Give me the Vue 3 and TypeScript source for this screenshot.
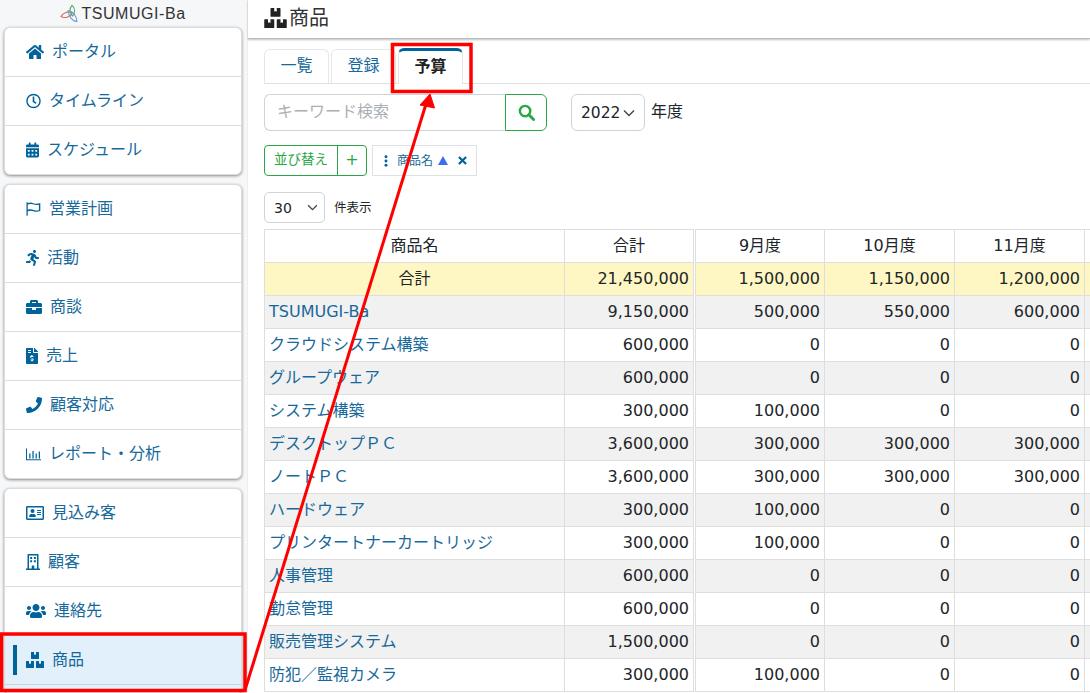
<script setup lang="ts">
interface Nav { label: string; icon: string; w: number; vb: string; active?: boolean }
const P: Record<string, [string, string]> = {
  home: ['0 0 576 512', 'M280.37 148.26L96 300.11V464a16 16 0 0 0 16 16l112.06-.29a16 16 0 0 0 15.92-16V368a16 16 0 0 1 16-16h64a16 16 0 0 1 16 16v95.64a16 16 0 0 0 16 16.05L464 480a16 16 0 0 0 16-16V300L295.67 148.26a12.19 12.19 0 0 0-15.3 0zM571.6 251.47L488 182.56V44.05a12 12 0 0 0-12-12h-56a12 12 0 0 0-12 12v72.61L318.47 43a48 48 0 0 0-61 0L4.34 251.47a12 12 0 0 0-1.6 16.9l25.5 31A12 12 0 0 0 45.15 301l235.22-193.74a12.19 12.19 0 0 1 15.3 0L530.9 301a12 12 0 0 0 16.9-1.6l25.5-31a12 12 0 0 0-1.7-16.93z'],
  clock: ['0 0 512 512', 'M256 8a248 248 0 1 0 0 496 248 248 0 0 0 0-496zm0 448a200 200 0 1 1 0-400 200 200 0 0 1 0 400zm62-104l-85-62c-3-2-5-6-5-10V116c0-7 5-12 12-12h32c7 0 12 5 12 12v142l67 48c5 4 7 11 3 17l-19 26c-4 5-11 7-17 3z'],
  cal: ['0 0 448 512', 'M0 464c0 26.5 21.5 48 48 48h352c26.5 0 48-21.5 48-48V192H0v272zm320-196c0-6.6 5.4-12 12-12h40c6.6 0 12 5.4 12 12v40c0 6.6-5.4 12-12 12h-40c-6.6 0-12-5.4-12-12v-40zm0 128c0-6.6 5.4-12 12-12h40c6.6 0 12 5.4 12 12v40c0 6.6-5.4 12-12 12h-40c-6.6 0-12-5.4-12-12v-40zM192 268c0-6.6 5.4-12 12-12h40c6.6 0 12 5.4 12 12v40c0 6.6-5.4 12-12 12h-40c-6.6 0-12-5.4-12-12v-40zm0 128c0-6.6 5.4-12 12-12h40c6.6 0 12 5.4 12 12v40c0 6.6-5.4 12-12 12h-40c-6.6 0-12-5.4-12-12v-40zM64 268c0-6.6 5.4-12 12-12h40c6.6 0 12 5.4 12 12v40c0 6.6-5.4 12-12 12H76c-6.6 0-12-5.4-12-12v-40zm0 128c0-6.6 5.4-12 12-12h40c6.6 0 12 5.4 12 12v40c0 6.6-5.4 12-12 12H76c-6.6 0-12-5.4-12-12v-40zM400 64h-48V16c0-8.8-7.2-16-16-16h-32c-8.8 0-16 7.2-16 16v48H160V16c0-8.8-7.2-16-16-16h-32c-8.8 0-16 7.2-16 16v48H48C21.5 64 0 85.5 0 112v48h448v-48c0-26.5-21.5-48-48-48z'],
  flag: ['0 0 512 512', 'M16 24h44v464H16zM60 56c70-36 130-24 196 0s130 28 232-4v276c-94 34-164 30-232 6s-126-30-196 2v-52c70-28 136-20 208 4s112 28 172 10V110c-72 18-130 10-200-12S112 76 60 106z'],
  run: ['0 0 416 512', 'M272 96c26.51 0 48-21.49 48-48S298.51 0 272 0s-48 21.49-48 48 21.49 48 48 48zM113.69 317.47l-14.8 34.52H32c-17.67 0-32 14.33-32 32s14.33 32 32 32h77.45c19.25 0 36.58-11.44 44.11-29.09l8.79-20.52-10.67-6.3c-17.32-10.23-30.06-25.37-37.99-42.61zM384 223.99h-44.03l-26.06-53.25c-12.5-25.55-35.45-44.23-61.78-50.94l-71.08-21.14c-28.3-6.8-57.77-.55-80.84 17.14l-39.67 30.41c-14.03 10.75-16.69 30.83-5.92 44.86s30.84 16.66 44.86 5.92l39.69-30.41c7.67-5.89 17.44-8 25.27-6.14l14.7 4.37-37.46 87.39c-12.62 29.48-1.31 64.01 26.3 80.31l84.98 50.17-27.47 87.73c-5.28 16.86 4.11 34.81 20.97 40.09 3.19 1 6.41 1.48 9.58 1.48 13.61 0 26.23-8.77 30.52-22.45l31.64-101.06c5.91-20.77-2.89-43.08-21.64-54.39l-61.24-36.14 31.31-78.28 20.27 41.43c8 16.34 24.92 26.89 43.11 26.89H384c17.67 0 32-14.33 32-32s-14.33-31.99-32-31.99z'],
  case: ['0 0 512 512', 'M320 336c0 8.84-7.16 16-16 16h-96c-8.84 0-16-7.16-16-16v-48H0v144c0 25.6 22.4 48 48 48h416c25.6 0 48-22.4 48-48V288H320v48zm144-208h-80V80c0-25.6-22.4-48-48-48H176c-25.6 0-48 22.4-48 48v48H48c-25.6 0-48 22.4-48 48v80h512v-80c0-25.6-22.4-48-48-48zm-144 0H192V96h128v32z'],
  invoice: ['0 0 384 512', 'M384 121.9V128H256V0h6.1c6.4 0 12.5 2.5 17 7l97.9 98c4.5 4.5 7 10.6 7 16.9zM224 136V0H24C10.7 0 0 10.7 0 24v464c0 13.3 10.7 24 24 24h336c13.3 0 24-10.7 24-24V160H248c-13.2 0-24-10.8-24-24zM64 72c0-4.4 3.6-8 8-8h80c4.4 0 8 3.6 8 8v16c0 4.4-3.6 8-8 8H72c-4.400 0-8-3.6-8-8V72zm0 64c0-4.400 3.600-8 8-8h80c4.400 0 8 3.600 8 8v16c0 4.400-3.600 8-8 8H72c-4.400 0-8-3.600-8-8v-16zm144 263.900V424c0 4.400-3.600 8-8 8h-16c-4.400 0-8-3.600-8-8v-24.300c-11.300-.6-22.300-4.500-31.400-11.400-3.900-2.900-4.100-8.800-.6-12.100l11.800-11.200c2.800-2.600 6.900-2.800 10.100-.8 3.900 2.400 8.300 3.700 12.800 3.700h28.100c6.500 0 11.800-5.900 11.800-13.200 0-6-3.600-11.200-8.800-12.700l-45-13.500c-18.600-5.600-31.600-23.400-31.600-43.400 0-24.500 19-44.400 42.700-45V232c0-4.400 3.600-8 8-8h16c4.400 0 8 3.600 8 8v24.300c11.300.6 22.300 4.500 31.400 11.400 3.900 2.900 4.100 8.800.6 12.100L223 291c-2.800 2.600-6.900 2.800-10.100.8-3.900-2.400-8.300-3.700-12.800-3.700H172c-6.500 0-11.800 5.900-11.800 13.200 0 6 3.600 11.200 8.800 12.700l45 13.500c18.600 5.600 31.600 23.400 31.600 43.400 0 24.500-19 44.400-42.600 45z'],
  phone: ['0 0 512 512', 'M493.4 24.6l-104-24c-11.3-2.6-22.9 3.3-27.5 13.9l-48 112c-4.2 9.800-1.400 21.300 6.900 28l60.600 49.600c-36 76.700-98.900 140.500-177.200 177.200l-49.600-60.600c-6.800-8.300-18.200-11.100-28-6.900l-112 48C3.900 366.500-2 378.100.6 389.400l24 104C27.100 504.200 36.700 512 48 512c256.100 0 464-207.500 464-464 0-11.200-7.700-20.900-18.600-23.400z'],
  chart: ['0 0 512 512', 'M0 64h34v368h478v36H0zM110 240h44v170h-44zM218 150h44v260h-44zM326 240h44v170h-44zM434 170h44v240h-44z'],
  idcard: ['0 0 576 512', 'M528 32H48C21.500 32 0 53.500 0 80v352c0 26.500 21.500 48 48 48h480c26.500 0 48-21.500 48-48V80c0-26.500-21.500-48-48-48zm0 400H48V80h480v352zM208 256a64 64 0 1 0 0-128 64 64 0 0 0 0 128zm-90 128h180c9 0 16-6 16-14v-20c0-33-32-62-72-62-13 0-17 6-34 6s-21-6-34-6c-40 0-72 29-72 62v20c0 8 7 14 16 14zM360 320h112c4 0 8-4 8-8v-16c0-4-4-8-8-8H360c-4 0-8 4-8 8v16c0 4 4 8 8 8zm0-64h112c4 0 8-4 8-8v-16c0-4-4-8-8-8H360c-4 0-8 4-8 8v16c0 4 4 8 8 8zm0-64h112c4 0 8-4 8-8v-16c0-4-4-8-8-8H360c-4 0-8 4-8 8v16c0 4 4 8 8 8z'],
  building: ['0 0 448 512', 'M12 464h36V24c0-13 11-24 24-24h304c13 0 24 11 24 24v440h36c7 0 12 5 12 12v36H0v-36c0-7 5-12 12-12zm84 0h88v-84c0-7 5-12 12-12h56c7 0 12 5 12 12v84h88V48H96zM140 96h48c5 0 8 3 8 8v48c0 5-3 8-8 8h-48c-5 0-8-3-8-8v-48c0-5 3-8 8-8zm120 0h48c5 0 8 3 8 8v48c0 5-3 8-8 8h-48c-5 0-8-3-8-8v-48c0-5 3-8 8-8zM140 200h48c5 0 8 3 8 8v48c0 5-3 8-8 8h-48c-5 0-8-3-8-8v-48c0-5 3-8 8-8zm120 0h48c5 0 8 3 8 8v48c0 5-3 8-8 8h-48c-5 0-8-3-8-8v-48c0-5 3-8 8-8z'],
  users: ['0 0 640 512', 'M96 224c35.300 0 64-28.700 64-64s-28.700-64-64-64-64 28.700-64 64 28.700 64 64 64zm448 0c35.300 0 64-28.700 64-64s-28.700-64-64-64-64 28.700-64 64 28.700 64 64 64zm32 32h-64c-17.600 0-33.500 7.100-45.100 18.600 40.300 22.100 68.900 62 75.100 109.400h66c17.700 0 32-14.300 32-32v-32c0-35.300-28.700-64-64-64zm-256 0c61.900 0 112-50.100 112-112S381.900 32 320 32 208 82.100 208 144s50.100 112 112 112zm76.800 32h-8.300c-20.800 10-43.900 16-68.500 16s-47.600-6-68.500-16h-8.300C179.600 288 128 339.600 128 403.200V432c0 26.500 21.500 48 48 48h288c26.500 0 48-21.500 48-48v-28.800c0-63.600-51.600-115.200-115.200-115.200zm-223.700-13.400C161.500 263.100 145.600 256 128 256H64c-35.300 0-64 28.700-64 64v32c0 17.700 14.300 32 32 32h65.900c6.300-47.400 34.900-87.300 75.200-109.400z'],
  boxes: ['0 0 576 512', 'M560 288h-80v96l-32-21.300-32 21.300v-96h-80c-8.800 0-16 7.200-16 16v192c0 8.800 7.200 16 16 16h224c8.800 0 16-7.200 16-16V304c0-8.800-7.200-16-16-16zm-384-64h224c8.800 0 16-7.200 16-16V16c0-8.800-7.200-16-16-16h-80v96l-32-21.300L256 96V0h-80c-8.800 0-16 7.200-16 16v192c0 8.800 7.200 16 16 16zm64 64h-80v96l-32-21.300L96 384v-96H16c-8.800 0-16 7.200-16 16v192c0 8.800 7.200 16 16 16h224c8.800 0 16-7.200 16-16V304c0-8.800-7.200-16-16-16z'],
}
const item = (label: string, icon: string, w: number, active = false): Nav => ({ label, icon, w, vb: P[icon][0], active })
const groups: Nav[][] = [
  [item('ポータル', 'home', 18), item('タイムライン', 'clock', 15), item('スケジュール', 'cal', 13)],
  [item('営業計画', 'flag', 15), item('活動', 'run', 13), item('商談', 'case', 16), item('売上', 'invoice', 12), item('顧客対応', 'phone', 16), item('レポート・分析', 'chart', 15)],
  [item('見込み客', 'idcard', 18), item('顧客', 'building', 14), item('連絡先', 'users', 20), item('商品', 'boxes', 18, true)],
]
const months = ['9月度', '10月度', '11月度']
const rows: [string, string, string, string, string][] = [
  ['TSUMUGI-Ba', '9,150,000', '500,000', '550,000', '600,000'],
  ['クラウドシステム構築', '600,000', '0', '0', '0'],
  ['グループウェア', '600,000', '0', '0', '0'],
  ['システム構築', '300,000', '100,000', '0', '0'],
  ['デスクトップＰＣ', '3,600,000', '300,000', '300,000', '300,000'],
  ['ノートＰＣ', '3,600,000', '300,000', '300,000', '300,000'],
  ['ハードウェア', '300,000', '100,000', '0', '0'],
  ['プリンタートナーカートリッジ', '300,000', '100,000', '0', '0'],
  ['人事管理', '600,000', '0', '0', '0'],
  ['勤怠管理', '600,000', '0', '0', '0'],
  ['販売管理システム', '1,500,000', '0', '0', '0'],
  ['防犯／監視カメラ', '300,000', '100,000', '0', '0'],
]
</script>

<template>
  <div class="app">
    <aside class="side">
      <div class="logo">
        <svg class="logo-mark" viewBox="0 0 20 19" width="20" height="19" fill="none" stroke-width="1.100">
          <path d="M1 12.500C3 8.500 8 7 12.500 8.500 11 12.500 5 15 1 12.500z" stroke="#d9695a" />
          <path d="M12 1.500C15.500 4 15.500 9 12.500 12 9.500 9 9 4.500 12 1.500z" stroke="#62ad62" />
          <path d="M8 6.500C12.500 7 16.500 11.500 17 17.500 12.500 17.500 8.500 12 8 6.500z" stroke="#6a9fe0" />
        </svg>
        <span>TSUMUGI-Ba</span>
      </div>
      <nav v-for="(g, gi) in groups" :key="gi" class="card">
        <a v-for="n in g" :key="n.label" class="nav" :class="{ active: n.active }">
          <svg class="ico" :viewBox="n.vb" :style="{ width: n.w + 'px' }"><path :d="P[n.icon][1]" /></svg>
          <span>{{ n.label }}</span>
        </a>
        <div v-if="gi === 2" class="tail"></div>
      </nav>
    </aside>

    <main class="main">
      <header class="head">
        <svg class="head-ico" viewBox="0 0 576 512"><path :d="P.boxes[1]" /></svg>
        <h1>商品</h1>
      </header>
      <div class="body">
        <div class="tabs">
          <div class="tab">一覧</div>
          <div class="tab">登録</div>
          <div class="tab on">予算</div>
        </div>

        <div class="filter">
          <div class="search">
            <div class="kw">キーワード検索</div>
            <div class="go">
              <svg viewBox="0 0 18 18" width="17" height="17" fill="none" stroke="#28a745" stroke-width="2.600">
                <circle cx="7.500" cy="7.500" r="5.500" /><path d="M11.500 11.500L16.500 16.500" stroke-linecap="round" stroke-width="3" />
              </svg>
            </div>
          </div>
          <div class="year">2022
            <svg viewBox="0 0 12 8" width="12" height="8" fill="none" stroke="#444" stroke-width="1.400"><path d="M1 1.500l5 5 5-5" /></svg>
          </div>
          <span class="nendo">年度</span>
        </div>

        <div class="sort">
          <div class="sbtn"><span class="sl">並び替え</span><span class="sp">+</span></div>
          <div class="chip">
            <svg viewBox="0 0 4 14" width="4" height="12" fill="#00629b"><circle cx="2" cy="2" r="1.700" /><circle cx="2" cy="7" r="1.700" /><circle cx="2" cy="12" r="1.700" /></svg>
            <span class="cname">商品名</span>
            <svg viewBox="0 0 10 9" width="10" height="9" fill="#3d6cf2"><path d="M5 0l5 9H0z" /></svg>
            <svg class="cx" viewBox="0 0 10 10" width="9" height="9" stroke="#00629b" stroke-width="2.400"><path d="M1 1l8 8M9 1l-8 8" /></svg>
          </div>
        </div>

        <div class="per">
          <div class="pselect">30
            <svg viewBox="0 0 12 8" width="11" height="7" fill="none" stroke="#444" stroke-width="1.500"><path d="M1 1.500l5 5 5-5" /></svg>
          </div>
          <span class="plabel">件表示</span>
        </div>

        <table class="grid">
          <colgroup>
            <col class="c1" /><col class="c2" /><col class="c3" /><col class="c3" /><col class="c3" /><col class="c3" />
          </colgroup>
          <thead>
            <tr>
              <th>商品名</th><th class="dbl">合計</th>
              <th v-for="m in months" :key="m">{{ m }}</th><th></th>
            </tr>
          </thead>
          <tbody>
            <tr class="total">
              <td class="ctr">合計</td><td class="num dbl">21,450,000</td>
              <td class="num">1,500,000</td><td class="num">1,150,000</td><td class="num">1,200,000</td><td></td>
            </tr>
            <tr v-for="r in rows" :key="r[0]" class="row">
              <td class="name">{{ r[0] }}</td><td class="num dbl">{{ r[1] }}</td>
              <td class="num">{{ r[2] }}</td><td class="num">{{ r[3] }}</td><td class="num">{{ r[4] }}</td><td></td>
            </tr>
          </tbody>
        </table>
      </div>
    </main>

    <svg class="marks" viewBox="0 0 1090 693" width="1090" height="693" fill="none">
      <rect x="392.500" y="44.500" width="78.500" height="47" stroke="#f00" stroke-width="3.500" />
      <rect x="1.500" y="634" width="243.500" height="56.500" stroke="#f00" stroke-width="3.500" />
      <path d="M245 690L426 104" stroke="#f00" stroke-width="3" />
      <path d="M430 94L434.500 108L420 105z" fill="#f00" stroke="#f00" stroke-width="1" />
    </svg>
  </div>
</template>

<style>
html, body { margin: 0; padding: 0; background: #fff; overflow: hidden; }
</style>

<style scoped>
.app {
  position: relative;
  display: flex;
  width: 1090px;
  height: 693px;
  overflow: hidden;
  background: #fff;
  font-family: "DejaVu Sans", "Noto Sans CJK JP", sans-serif;
  font-size: 16px;
  line-height: 20px;
  color: #212529;
}
.side {
  flex: 0 0 248px;
  box-sizing: border-box;
  height: 693px;
  padding-left: 4px;
  background: #f6f7f9;
  border-right: 1px solid #eceef0;
  overflow: hidden;
}
.logo {
  height: 27px;
  width: 238px;
  display: flex;
  align-items: center;
  justify-content: center;
  gap: 1px;
  font-family: "Liberation Sans", sans-serif;
  font-size: 16px;
  letter-spacing: 0.550px;
  color: #333;
}
.card {
  box-sizing: border-box;
  width: 238px;
  margin-bottom: 9px;
  background: #fff;
  border: 1px solid #dcdcdc;
  border-radius: 6px;
  box-shadow: 0 1px 3px rgba(0, 0, 0, 0.45);
  overflow: hidden;
}
.nav {
  position: relative;
  box-sizing: border-box;
  height: 49px;
  display: flex;
  align-items: center;
  padding-left: 21px;
  border-bottom: 1px solid #dcdcdc;
  color: #17699b;
  line-height: 1;
}
.card > .nav:last-child { border-bottom: 0; height: 48px; }
.nav.active { background: #e1f0fb; border-bottom-color: #ccd3d8; }
.nav.active::before {
  content: "";
  position: absolute;
  left: 8px;
  top: 9px;
  bottom: 9px;
  width: 4px;
  background: #00639a;
}
.tail { height: 8px; background: #e1f0fb; }
.ico { height: 16px; margin-right: 8px; fill: #00639a; flex: none; }

.main { flex: 1; min-width: 0; height: 693px; display: flex; flex-direction: column; }
.head {
  box-sizing: border-box;
  height: 39px;
  flex: none;
  display: flex;
  align-items: center;
  padding: 0 0 3px 16px;
  border-bottom: 1px solid #bbb;
  box-shadow: 0 1px 2px rgba(0, 0, 0, 0.25);
}
.head-ico { width: 23px; height: 20px; fill: #222; margin-right: 2px; }
h1 { margin: 0; font-size: 20px; font-weight: 400; line-height: 1; color: #333; }
.body { padding: 10px 0 0 16px; }

.tabs {
  display: flex;
  align-items: flex-end;
  gap: 2px;
  height: 35px;
  box-sizing: border-box;
  border-bottom: 1px solid #dee2e6;
}
.tab {
  box-sizing: border-box;
  width: 65px;
  height: 34px;
  border: 1px solid #e4e7ea;
  border-bottom: 0;
  border-radius: 6px 6px 0 0;
  text-align: center;
  line-height: 32px;
  font-size: 16px;
  color: #17699b;
}
.tab.on {
  height: 36px;
  border-top: 3px solid #00639a;
  font-weight: 700;
  color: #222;
  margin-bottom: -1px;
  background: #fff;
}

.filter { display: flex; align-items: center; margin-top: 10px; height: 37px; }
.search { display: flex; width: 283px; height: 37px; }
.kw {
  box-sizing: border-box;
  width: 241px;
  height: 37px;
  padding-left: 12px;
  border: 1px solid #ced4da;
  border-right: 0;
  border-radius: 6px 0 0 6px;
  line-height: 34px;
  color: #a9afb5;
}
.go {
  box-sizing: border-box;
  width: 42px;
  height: 37px;
  border: 1px solid #28a745;
  border-radius: 0 6px 6px 0;
  display: flex;
  align-items: center;
  justify-content: center;
}
.year {
  box-sizing: border-box;
  width: 74px;
  height: 37px;
  margin-left: 24px;
  padding-left: 9px;
  display: flex;
  align-items: center;
  gap: 3px;
  border: 1px solid #ced4da;
  border-radius: 6px;
  font-size: 15.500px;
}
.nendo { margin-left: 6px; margin-top: -2px; }

.sort { display: flex; gap: 5px; margin-top: 14px; height: 31px; }
.sbtn {
  box-sizing: border-box;
  width: 103px;
  display: flex;
  border: 1px solid #28a745;
  border-radius: 4px;
  color: #28a745;
  font-size: 13.500px;
}
.sl { width: 73px; text-align: center; line-height: 27px; border-right: 1px solid #28a745; box-sizing: border-box; }
.sp { flex: 1; text-align: center; line-height: 27px; font-size: 16px; }
.chip {
  box-sizing: border-box;
  width: 105px;
  display: flex;
  align-items: center;
  padding-left: 11px;
  border: 1px solid #dee2e6;
  color: #17699b;
  font-size: 12px;
}
.cname { margin: 0 5px 0 9px; }
.cx { margin-left: 10px; }

.per { display: flex; align-items: center; margin-top: 16px; height: 31px; }
.pselect {
  box-sizing: border-box;
  width: 61px;
  height: 31px;
  padding-left: 9px;
  display: flex;
  align-items: center;
  gap: 15px;
  border: 1px solid #ced4da;
  border-radius: 5px;
  font-size: 14px;
}
.plabel { margin-left: 9px; font-size: 12.500px; }

.grid {
  table-layout: fixed;
  width: 950px;
  margin-top: 6px;
  border-collapse: collapse;
  font-size: 16px;
  line-height: 20px;
}
.c1 { width: 300px; }
.c2 { width: 130px; }
.c3 { width: 130px; }
.grid th, .grid td {
  box-sizing: border-box;
  height: 33px;
  padding: 0 4px;
  border: 1px solid #dedede;
  font-weight: 400;
  white-space: nowrap;
  overflow: hidden;
}
.grid th { text-align: center; }
.grid .dbl { border-right: 3px double #dedede; }
.total td { background: #fef7c3; }
.ctr { text-align: center; }
.num { text-align: right; }
.row:nth-child(even) td { background: #f1f1f1; }
.name { color: #17699b; }

.marks { position: absolute; left: 0; top: 0; pointer-events: none; }
</style>
